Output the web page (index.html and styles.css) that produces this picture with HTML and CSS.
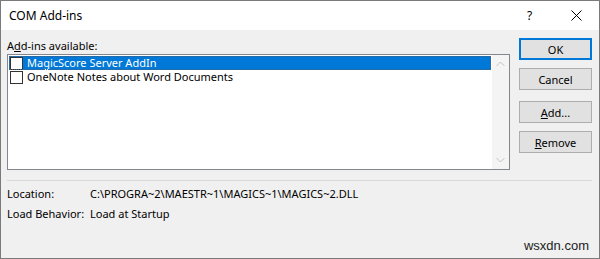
FILE: index.html
```html
<!DOCTYPE html>
<html lang="en">
<head>
  <meta charset="UTF-8">
  <title>COM Add-ins</title>
  <link rel="stylesheet" href="styles.css">
</head>
<body>

  <!-- Dialog window -->
  <div class="dialog">
    <div class="titlebar">
      <span class="title">COM Add-ins</span>
      <span class="help">?</span>
      <span class="close">
        <svg width="11" height="11" viewBox="0 0 11 11">
          <path d="M0.5 0.5 L10.5 10.5 M10.5 0.5 L0.5 10.5" stroke="#000" stroke-width="1" fill="none"/>
        </svg>
      </span>
    </div>

    <div class="content">
      <div class="main">
        <div class="left">
          <div class="label">A<u>d</u>d-ins available:</div>
          <div class="listbox">
            <div class="items">
              <div class="item selected"><span class="check"></span>MagicScore Server AddIn</div>
              <div class="item"><span class="check"></span>OneNote Notes about Word Documents</div>
            </div>
            <div class="scrollbar">
              <svg width="9" height="6" viewBox="0 0 9 6"><path d="M0.5 5 L4.5 1 L8.5 5" stroke="#c2c2c2" fill="none"/></svg>
              <svg width="9" height="6" viewBox="0 0 9 6"><path d="M0.5 1 L4.5 5 L8.5 1" stroke="#c2c2c2" fill="none"/></svg>
            </div>
          </div>
        </div>

        <div class="buttons">
          <button class="btn default">OK</button>
          <button class="btn">Cancel</button>
          <button class="btn spaced"><u>A</u>dd...</button>
          <button class="btn"><u>R</u>emove</button>
        </div>
      </div>

      <div class="separator"></div>

      <div class="details">
        <span>Location:</span>
        <span>C:\PROGRA~2\MAESTR~1\MAGICS~1\MAGICS~2.DLL</span>
        <span>Load Behavior:</span>
        <span>Load at Startup</span>
      </div>

      <div class="watermark">wsxdn.com</div>
    </div>
  </div>

</body>
</html>
```

FILE: styles.css
```css
body {
  margin: 0;
  font-family: 'Noto Sans', 'Open Sans', sans-serif;
  font-size: 11px;
  color: #000;
}

/* Window frame */
.dialog {
  width: 600px;
  height: 259px;
  box-sizing: border-box;
  border: 1px solid #7a7a7a;
  background-color: #f0f0f0;
  display: flex;
  flex-direction: column;
}

.titlebar {
  height: 29px;
  background-color: #fff;
  display: flex;
  align-items: center;
  padding-left: 8px;
}

.title {
  flex: 1;
  font-size: 12px;
}

.help {
  width: 10px;
  margin-right: 34px;
  font-size: 12px;
}

.close {
  width: 11px;
  height: 11px;
  margin-right: 17px;
  display: flex;
}

/* Body */
.content {
  flex: 1;
  display: flex;
  flex-direction: column;
  padding: 8px 7px 0 6px;
}

.main {
  display: flex;
  gap: 9px;
}

.left {
  width: 503px;
}

.label {
  height: 16px;
  line-height: 15px;
}

.listbox {
  height: 116px;
  box-sizing: border-box;
  border: 1px solid #828790;
  background-color: #fff;
  display: flex;
}

.items {
  flex: 1;
  padding: 1px 1px 0 1px;
}

.item {
  height: 14px;
  line-height: 14px;
  display: flex;
  align-items: center;
  white-space: nowrap;
}

.item.selected {
  background-color: #0078d7;
  color: #fff;
  outline: 1px dotted #4a5f78;
  outline-offset: -1px;
}

.check {
  width: 13px;
  height: 13px;
  box-sizing: border-box;
  border: 1px solid #333;
  background-color: #fff;
  margin: 0 4px 0 1px;
  flex-shrink: 0;
}

.scrollbar {
  width: 17px;
  background-color: #f4f4f4;
  display: flex;
  flex-direction: column;
  justify-content: space-between;
  align-items: center;
  padding: 6px 0 6px 0;
}

/* Buttons column */
.buttons {
  display: flex;
  flex-direction: column;
  gap: 8px;
}

.btn {
  width: 73px;
  height: 22px;
  box-sizing: border-box;
  border: 1px solid #adadad;
  background-color: #e1e1e1;
  font-family: inherit;
  font-size: 11px;
  color: #000;
  padding: 0;
}

.btn.default {
  border: 2px solid #0078d7;
}

.btn.spaced {
  margin-top: 3px;
}

.separator {
  height: 1px;
  background-color: #d9d9d9;
  margin: 10px 0 0 0;
}

.details {
  display: grid;
  grid-template-columns: 83px auto;
  row-gap: 4px;
  margin-top: 5px;
  line-height: 16px;
  white-space: nowrap;
}

.watermark {
  margin-top: auto;
  margin-bottom: 5px;
  text-align: right;
  font-family: 'Liberation Sans', sans-serif;
  font-size: 13px;
  color: #222;
  padding-right: 3px;
}
```
